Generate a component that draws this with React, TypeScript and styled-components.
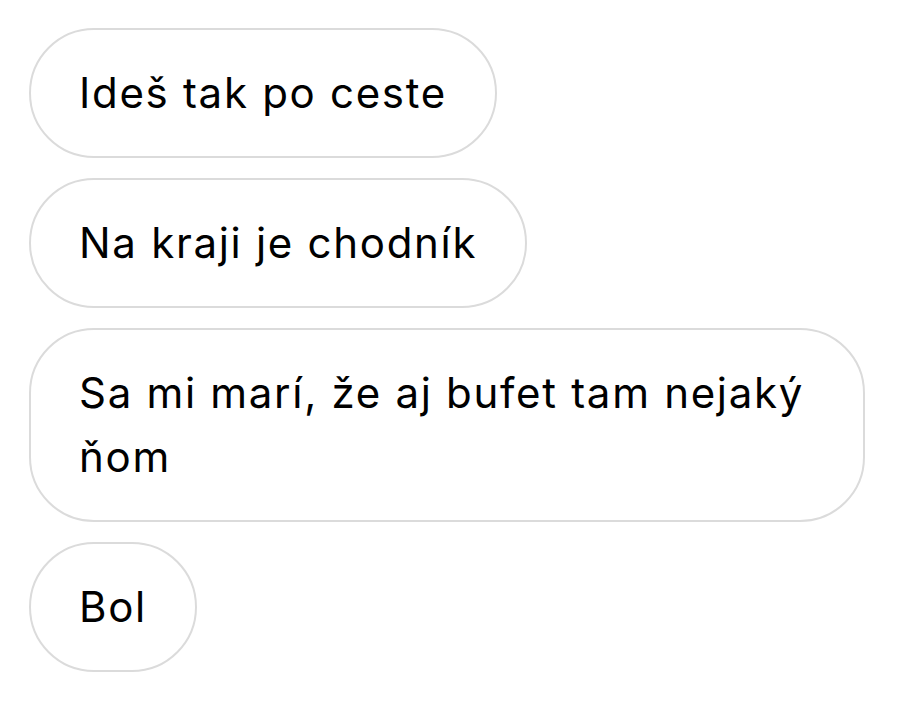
import React from "react";
import styled, { createGlobalStyle } from "styled-components";

const Global = createGlobalStyle`
  html, body { margin: 0; padding: 0; background: #ffffff; }
  body { font-family: Inter, "Noto Sans", sans-serif; }
`;

const Thread = styled.div`
  display: flex;
  flex-direction: column;
  align-items: flex-start;
  gap: 20px;
  padding: 28px 0 0 29px;
`;

const Bubble = styled.div`
  box-sizing: border-box;
  max-width: 836px;
  border: 2px solid #dbdbdb;
  border-radius: 65px;
  padding: 31px 48px 31px 48px;
  font-size: 42px;
  line-height: 64px;
  color: #000;
  letter-spacing: 1.7px;
  background: #fff;
`;

const messages = [
  "Ideš tak po ceste",
  "Na kraji je chodník",
  "Sa mi marí, že aj bufet tam nejaký ňom",
  "Bol",
];

export default function App() {
  return (
    <>
      <Global />
      <Thread>
        {messages.map((m) => (
          <Bubble key={m}>{m}</Bubble>
        ))}
      </Thread>
    </>
  );
}
